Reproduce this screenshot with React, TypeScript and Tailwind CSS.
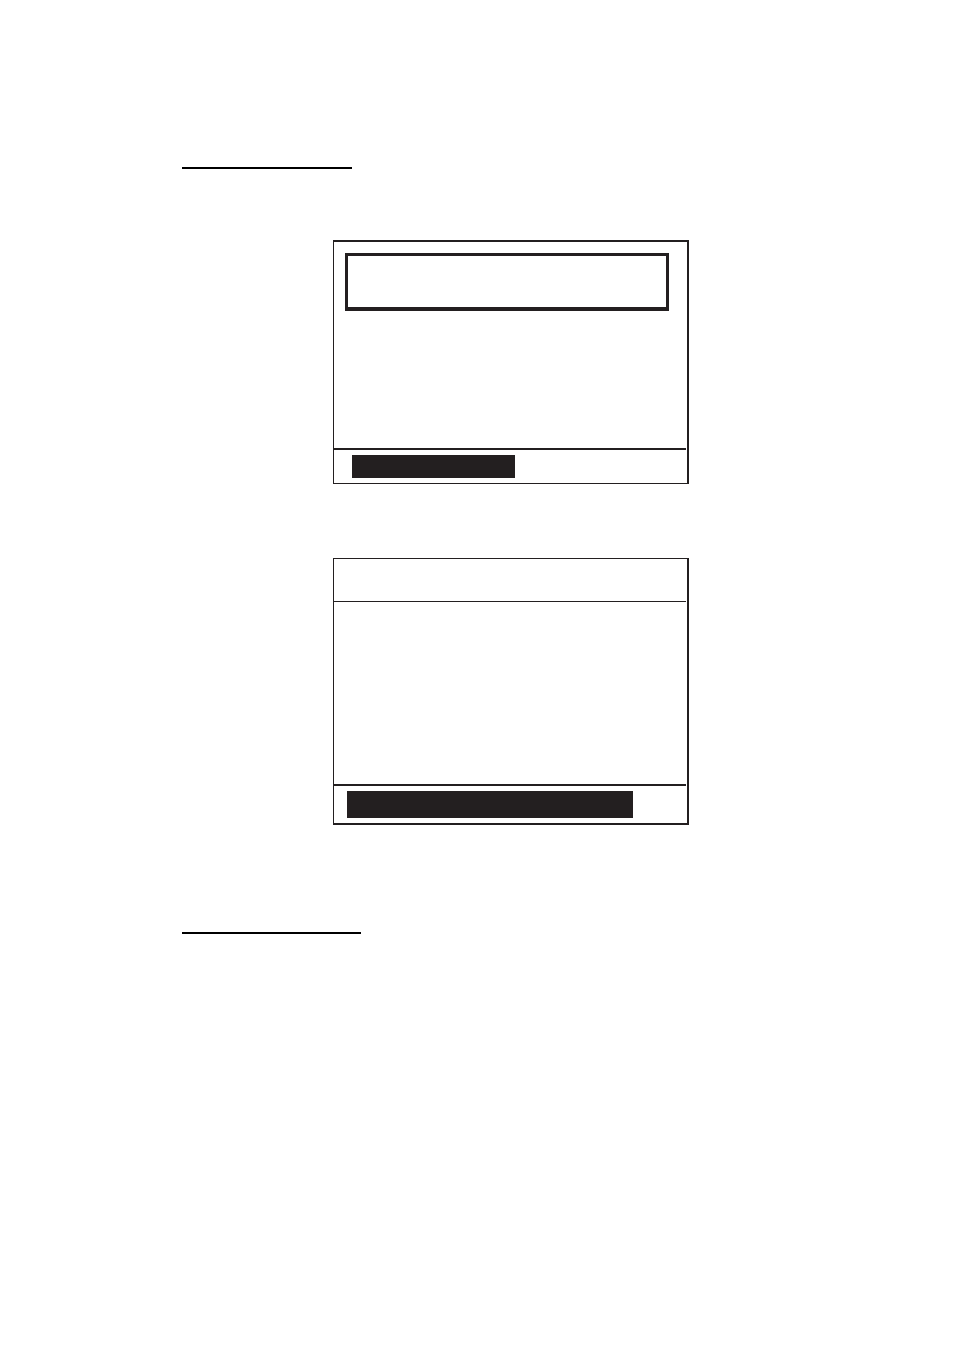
const TopPanel = () => {
    return (
        <section className="w-full max-w-[356px] border-t-2 border-r-2 border-b border-l border-[#231f20] pr-px">
            <div className="h-[206px] pt-[11px] pl-[11px] pr-[17px]">
                <div className="h-[58px] border-[3px] border-b-4 border-[#231f20]"></div>
            </div>
            <div className="border-t-2 border-[#231f20] py-[5px] pl-[18px]">
                <div className="h-[23px] w-full max-w-[163px] bg-[#231f20]"></div>
            </div>
        </section>
    )
}

const BottomPanel = () => {
    return (
        <section className="w-full max-w-[356px] border-t border-r-2 border-b-2 border-l border-[#231f20] pr-px">
            <div className="h-[43px] border-b border-[#231f20]"></div>
            <div className="h-[182px]"></div>
            <div className="border-t-2 border-[#231f20] py-[5px] pl-[13px]">
                <div className="h-[27px] w-full max-w-[286px] bg-[#231f20]"></div>
            </div>
        </section>
    )
}

export default function App() {
    return (
        <main className="min-h-screen bg-white pt-[167px] pb-16 pl-[182px] pr-4">
            <hr className="w-full max-w-[170px] border-t-2 border-black" />

            <div className="flex flex-col gap-[74px] pt-[71px] pb-[107px] pl-[151px]">
                <TopPanel />
                <BottomPanel />
            </div>

            <hr className="w-full max-w-[179px] border-t-2 border-black" />
        </main>
    )
}
